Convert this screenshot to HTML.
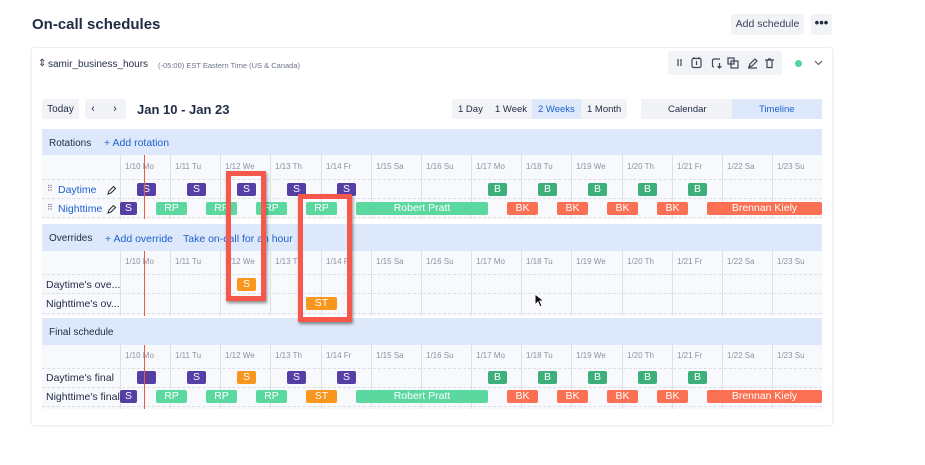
<!DOCTYPE html>
<html><head><meta charset="utf-8"><style>
*{box-sizing:border-box;margin:0;padding:0}
body{width:925px;height:465px;background:#fff;font-family:"Liberation Sans",sans-serif;color:#1f2a44;position:relative;overflow:hidden}
.a{position:absolute}
.t{font-size:11px;white-space:nowrap}
.hdr{position:absolute;left:42px;width:780px;background:#dde9fb}
.grid{position:absolute;left:42px;width:780px;background:#f7f9fc}
.vl{position:absolute;width:1px;background:#dcdfe4}
.hl{position:absolute;left:42px;width:780px;border-top:1px dashed #dcdfe4}
.d{position:absolute;font-size:8px;color:#8a93a3;white-space:nowrap}
.b{position:absolute;height:13px;border-radius:2px;color:#fff;font-size:10.5px;text-align:center;line-height:13px}
.p{background:#553fa5}.g{background:#3daf7a}.l{background:#5bd7a0}.r{background:#fb6f52}.o{background:#f8961e}
.blue{color:#1f5fd0}
.rb{position:absolute;border:5px solid #f7584c;box-shadow:1px 2px 3px rgba(0,0,0,.45)}
</style></head><body>
<div class="a" style="left:32px;top:16px;font-size:15px;font-weight:bold">On-call schedules</div>
<div class="a t" style="left:731px;top:14px;width:73px;height:21px;background:#f1f3f6;border-radius:3px;line-height:21px;text-align:center;color:#3b4558;font-size:10.5px">Add schedule</div>
<div class="a" style="left:811px;top:14px;width:21px;height:21px;background:#f1f3f6;border-radius:3px;line-height:17px;text-align:center;font-weight:bold;font-size:13px">•••</div>

<div class="a" style="left:31px;top:47px;width:802px;height:379px;border:1px solid #eceef2;border-radius:3px;box-shadow:0 1px 2px rgba(0,0,0,.06)"></div>
<div class="a t" style="left:38px;top:58px;font-size:10px">⇕</div>
<div class="a t" style="left:48px;top:59px;font-size:10px">samir_business_hours</div>
<div class="a t" style="left:158px;top:61px;font-size:7.5px;color:#6b7486">(-05:00) EST Eastern Time (US &amp; Canada)</div>
<div class="a" style="left:668px;top:51px;width:114px;height:24px;background:#f1f3f6;border-radius:2px"></div>
<svg class="a" style="left:672px;top:55px" width="108" height="16" viewBox="0 0 108 16" fill="none" stroke="#3b4558" stroke-width="1.2">
<path d="M6 4v7M9 4v7"/>
<rect x="20" y="3.5" width="9" height="9" rx="1.5"/><path d="M22 2v2M27 2v2M24.5 6v4"/>
<path d="M48 4h-6a1.5 1.5 0 0 0-1.5 1.5v5a1.5 1.5 0 0 0 1.5 1.5M47.5 8v5M45.5 11l2 2 2-2"/>
<rect x="56" y="3" width="6" height="6"/><rect x="59" y="6" width="7" height="7"/>
<path d="M77 12l1-3 5-5 2 2-5 5zM76 13h9"/>
<path d="M93 5h9M95 5v7.5h5V5M96 4h3"/>
</svg>
<div class="a" style="left:795px;top:60px;width:7px;height:7px;border-radius:50%;background:#4fd59a"></div>
<svg class="a" style="left:814px;top:60px" width="9" height="6"><path d="M1 1l3.5 3.5L8 1" fill="none" stroke="#556" stroke-width="1.1"/></svg>

<div class="a t" style="left:42px;top:99px;width:37px;height:20px;background:#f1f3f6;border-radius:2px;line-height:21px;text-align:center;font-size:10px">Today</div>
<div class="a t" style="left:85px;top:99px;width:41px;height:20px;background:#f1f3f6;border-radius:2px;line-height:20px;font-size:11px">&nbsp;&nbsp;‹&nbsp;&nbsp;&nbsp;&nbsp;&nbsp;&nbsp;›</div>
<div class="a" style="left:137px;top:102px;font-size:13px;font-weight:bold">Jan 10 - Jan 23</div>
<div class="a" style="left:452px;top:99px;width:175px;height:20px;background:#f1f3f6;border-radius:2px"></div>
<div class="a" style="left:532px;top:99px;width:49px;height:20px;background:#dde9fb"></div>
<div class="a t" style="left:458px;top:104px;font-size:9.5px">1 Day</div>
<div class="a t" style="left:495px;top:104px;font-size:9.5px">1 Week</div>
<div class="a t blue" style="left:538px;top:104px;font-size:9.5px">2 Weeks</div>
<div class="a t" style="left:587px;top:104px;font-size:9.5px">1 Month</div>
<div class="a" style="left:641px;top:99px;width:181px;height:20px;background:#f1f3f6;border-radius:2px"></div>
<div class="a" style="left:732px;top:99px;width:90px;height:20px;background:#dde9fb"></div>
<div class="a t" style="left:668px;top:104px;font-size:9.5px">Calendar</div>
<div class="a t blue" style="left:759px;top:104px;font-size:9.5px">Timeline</div>

<div class="hdr" style="top:129px;height:26px"></div>
<div class="grid" style="top:155px;height:64px"></div>
<div class="hdr" style="top:224px;height:27px"></div>
<div class="grid" style="top:251px;height:65px"></div>
<div class="hdr" style="top:318px;height:27px"></div>
<div class="grid" style="top:345px;height:64px"></div>
<div class="a t" style="left:49px;top:138px;font-size:10px">Rotations</div>
<div class="a t blue" style="left:104px;top:137px;font-size:10.5px">+ Add rotation</div>
<div class="a t" style="left:49px;top:233px;font-size:10px">Overrides</div>
<div class="a t blue" style="left:105px;top:233px;font-size:10.5px">+ Add override</div>
<div class="a t blue" style="left:183px;top:233px;font-size:10.5px">Take on-call for an hour</div>
<div class="a t" style="left:49px;top:327px;font-size:10px">Final schedule</div>

<div class="vl" style="left:120px;top:155px;height:64px"></div><div class="vl" style="left:170px;top:155px;height:64px"></div><div class="vl" style="left:220px;top:155px;height:64px"></div><div class="vl" style="left:270px;top:155px;height:64px"></div><div class="vl" style="left:321px;top:155px;height:64px"></div><div class="vl" style="left:371px;top:155px;height:64px"></div><div class="vl" style="left:421px;top:155px;height:64px"></div><div class="vl" style="left:471px;top:155px;height:64px"></div><div class="vl" style="left:521px;top:155px;height:64px"></div><div class="vl" style="left:571px;top:155px;height:64px"></div><div class="vl" style="left:622px;top:155px;height:64px"></div><div class="vl" style="left:672px;top:155px;height:64px"></div><div class="vl" style="left:722px;top:155px;height:64px"></div><div class="vl" style="left:772px;top:155px;height:64px"></div>
<div class="vl" style="left:120px;top:251px;height:65px"></div><div class="vl" style="left:170px;top:251px;height:65px"></div><div class="vl" style="left:220px;top:251px;height:65px"></div><div class="vl" style="left:270px;top:251px;height:65px"></div><div class="vl" style="left:321px;top:251px;height:65px"></div><div class="vl" style="left:371px;top:251px;height:65px"></div><div class="vl" style="left:421px;top:251px;height:65px"></div><div class="vl" style="left:471px;top:251px;height:65px"></div><div class="vl" style="left:521px;top:251px;height:65px"></div><div class="vl" style="left:571px;top:251px;height:65px"></div><div class="vl" style="left:622px;top:251px;height:65px"></div><div class="vl" style="left:672px;top:251px;height:65px"></div><div class="vl" style="left:722px;top:251px;height:65px"></div><div class="vl" style="left:772px;top:251px;height:65px"></div>
<div class="vl" style="left:120px;top:345px;height:64px"></div><div class="vl" style="left:170px;top:345px;height:64px"></div><div class="vl" style="left:220px;top:345px;height:64px"></div><div class="vl" style="left:270px;top:345px;height:64px"></div><div class="vl" style="left:321px;top:345px;height:64px"></div><div class="vl" style="left:371px;top:345px;height:64px"></div><div class="vl" style="left:421px;top:345px;height:64px"></div><div class="vl" style="left:471px;top:345px;height:64px"></div><div class="vl" style="left:521px;top:345px;height:64px"></div><div class="vl" style="left:571px;top:345px;height:64px"></div><div class="vl" style="left:622px;top:345px;height:64px"></div><div class="vl" style="left:672px;top:345px;height:64px"></div><div class="vl" style="left:722px;top:345px;height:64px"></div><div class="vl" style="left:772px;top:345px;height:64px"></div>
<div class="hl" style="top:179px"></div><div class="hl" style="top:198px"></div><div class="hl" style="top:217px"></div>
<div class="hl" style="top:274px"></div><div class="hl" style="top:293px"></div><div class="hl" style="top:313px"></div>
<div class="hl" style="top:368px"></div><div class="hl" style="top:387px"></div><div class="hl" style="top:406px"></div>

<div class="d" style="left:125px;top:162px">1/10 Mo</div><div class="d" style="left:175px;top:162px">1/11 Tu</div><div class="d" style="left:225px;top:162px">1/12 We</div><div class="d" style="left:275px;top:162px">1/13 Th</div><div class="d" style="left:326px;top:162px">1/14 Fr</div><div class="d" style="left:376px;top:162px">1/15 Sa</div><div class="d" style="left:426px;top:162px">1/16 Su</div><div class="d" style="left:476px;top:162px">1/17 Mo</div><div class="d" style="left:526px;top:162px">1/18 Tu</div><div class="d" style="left:576px;top:162px">1/19 We</div><div class="d" style="left:627px;top:162px">1/20 Th</div><div class="d" style="left:677px;top:162px">1/21 Fr</div><div class="d" style="left:727px;top:162px">1/22 Sa</div><div class="d" style="left:777px;top:162px">1/23 Su</div>
<div class="d" style="left:125px;top:257px">1/10 Mo</div><div class="d" style="left:175px;top:257px">1/11 Tu</div><div class="d" style="left:225px;top:257px">1/12 We</div><div class="d" style="left:275px;top:257px">1/13 Th</div><div class="d" style="left:326px;top:257px">1/14 Fr</div><div class="d" style="left:376px;top:257px">1/15 Sa</div><div class="d" style="left:426px;top:257px">1/16 Su</div><div class="d" style="left:476px;top:257px">1/17 Mo</div><div class="d" style="left:526px;top:257px">1/18 Tu</div><div class="d" style="left:576px;top:257px">1/19 We</div><div class="d" style="left:627px;top:257px">1/20 Th</div><div class="d" style="left:677px;top:257px">1/21 Fr</div><div class="d" style="left:727px;top:257px">1/22 Sa</div><div class="d" style="left:777px;top:257px">1/23 Su</div>
<div class="d" style="left:125px;top:351px">1/10 Mo</div><div class="d" style="left:175px;top:351px">1/11 Tu</div><div class="d" style="left:225px;top:351px">1/12 We</div><div class="d" style="left:275px;top:351px">1/13 Th</div><div class="d" style="left:326px;top:351px">1/14 Fr</div><div class="d" style="left:376px;top:351px">1/15 Sa</div><div class="d" style="left:426px;top:351px">1/16 Su</div><div class="d" style="left:476px;top:351px">1/17 Mo</div><div class="d" style="left:526px;top:351px">1/18 Tu</div><div class="d" style="left:576px;top:351px">1/19 We</div><div class="d" style="left:627px;top:351px">1/20 Th</div><div class="d" style="left:677px;top:351px">1/21 Fr</div><div class="d" style="left:727px;top:351px">1/22 Sa</div><div class="d" style="left:777px;top:351px">1/23 Su</div>

<div class="a t" style="left:47px;top:184px;font-size:8px;color:#667">⠿</div>
<div class="a t blue" style="left:58px;top:184px;font-size:10.5px">Daytime</div>
<div class="a t" style="left:47px;top:203px;font-size:8px;color:#667">⠿</div>
<div class="a t blue" style="left:58px;top:203px;font-size:10.5px">Nighttime</div>
<svg class="a" style="left:107px;top:185px" width="10" height="10"><path d="M1 9l1-3 4.5-4.5 2 2L4 8z" fill="none" stroke="#333" stroke-width="1.1"/></svg>
<svg class="a" style="left:107px;top:204px" width="10" height="10"><path d="M1 9l1-3 4.5-4.5 2 2L4 8z" fill="none" stroke="#333" stroke-width="1.1"/></svg>
<div class="a t" style="left:46px;top:279px;font-size:10.5px">Daytime's ove...</div>
<div class="a t" style="left:46px;top:298px;font-size:10.5px">Nighttime's ov...</div>
<div class="a t" style="left:46px;top:372px;font-size:10.5px">Daytime's final</div>
<div class="a t" style="left:46px;top:391px;font-size:10.5px">Nighttime's final</div>

<div class="b p" style="left:137px;top:183px;width:19px">S</div><div class="b p" style="left:187px;top:183px;width:19px">S</div><div class="b p" style="left:237px;top:183px;width:19px">S</div><div class="b p" style="left:287px;top:183px;width:19px">S</div><div class="b p" style="left:337px;top:183px;width:19px">S</div>
<div class="b g" style="left:488px;top:183px;width:19px">B</div><div class="b g" style="left:538px;top:183px;width:19px">B</div><div class="b g" style="left:588px;top:183px;width:19px">B</div><div class="b g" style="left:638px;top:183px;width:19px">B</div><div class="b g" style="left:688px;top:183px;width:19px">B</div>
<div class="b p" style="left:120px;top:202px;width:17px">S</div>
<div class="b l" style="left:156px;top:202px;width:31px">RP</div><div class="b l" style="left:206px;top:202px;width:31px">RP</div><div class="b l" style="left:256px;top:202px;width:31px">RP</div><div class="b l" style="left:306px;top:202px;width:31px">RP</div>
<div class="b l" style="left:356px;top:202px;width:132px">Robert Pratt</div>
<div class="b r" style="left:507px;top:202px;width:31px">BK</div><div class="b r" style="left:557px;top:202px;width:31px">BK</div><div class="b r" style="left:607px;top:202px;width:31px">BK</div><div class="b r" style="left:657px;top:202px;width:31px">BK</div>
<div class="b r" style="left:707px;top:202px;width:115px">Brennan Kiely</div>
<div class="b o" style="left:237px;top:278px;width:19px">S</div>
<div class="b o" style="left:306px;top:297px;width:31px">ST</div>
<div class="b p" style="left:137px;top:371px;width:19px"></div><div class="b p" style="left:187px;top:371px;width:19px">S</div><div class="b o" style="left:237px;top:371px;width:19px">S</div><div class="b p" style="left:287px;top:371px;width:19px">S</div><div class="b p" style="left:337px;top:371px;width:19px">S</div>
<div class="b g" style="left:488px;top:371px;width:19px">B</div><div class="b g" style="left:538px;top:371px;width:19px">B</div><div class="b g" style="left:588px;top:371px;width:19px">B</div><div class="b g" style="left:638px;top:371px;width:19px">B</div><div class="b g" style="left:688px;top:371px;width:19px">B</div>
<div class="b p" style="left:120px;top:390px;width:17px">S</div>
<div class="b l" style="left:156px;top:390px;width:31px">RP</div><div class="b l" style="left:206px;top:390px;width:31px">RP</div><div class="b l" style="left:256px;top:390px;width:31px">RP</div><div class="b o" style="left:306px;top:390px;width:31px">ST</div>
<div class="b l" style="left:356px;top:390px;width:132px">Robert Pratt</div>
<div class="b r" style="left:507px;top:390px;width:31px">BK</div><div class="b r" style="left:557px;top:390px;width:31px">BK</div><div class="b r" style="left:607px;top:390px;width:31px">BK</div><div class="b r" style="left:657px;top:390px;width:31px">BK</div>
<div class="b r" style="left:707px;top:390px;width:115px">Brennan Kiely</div>

<div class="a" style="left:144px;top:155px;width:1px;height:64px;background:#f05a3c"></div>
<div class="a" style="left:144px;top:251px;width:1px;height:65px;background:#f05a3c"></div>
<div class="a" style="left:144px;top:345px;width:1px;height:64px;background:#f05a3c"></div>

<div class="rb" style="left:226px;top:171px;width:40px;height:130px"></div>
<div class="rb" style="left:298px;top:194px;width:54px;height:128px"></div>

<svg class="a" style="left:534px;top:293px" width="10" height="15"><path d="M1 1v11l3-3 2 5 2-1-2-5h4z" fill="#111" stroke="#fff" stroke-width="1"/></svg>
</body></html>
